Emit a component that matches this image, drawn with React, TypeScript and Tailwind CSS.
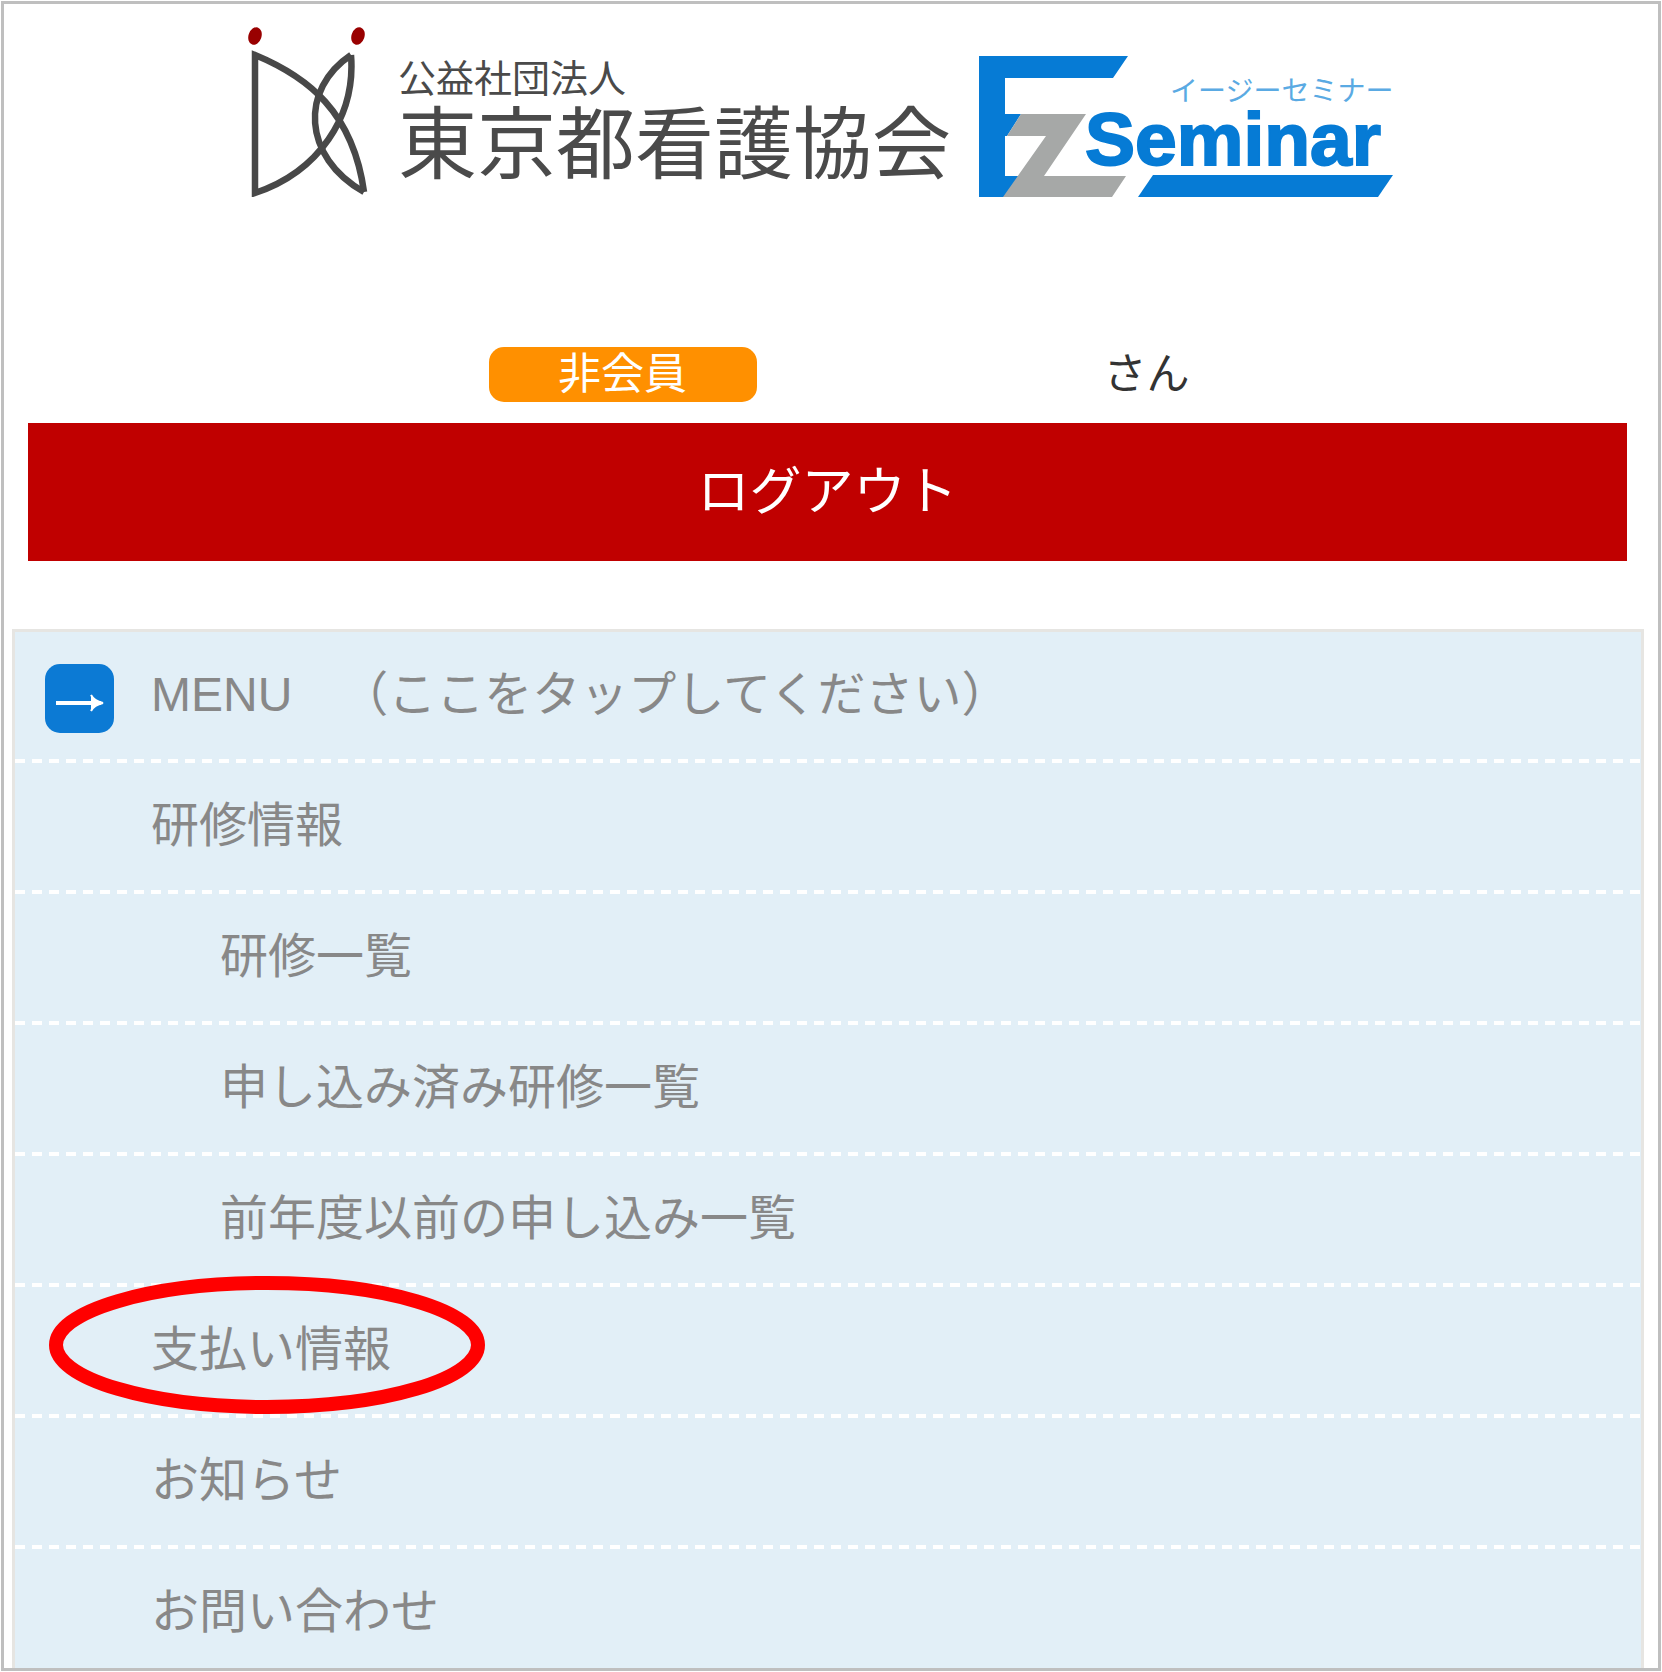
// スマホ版メニュー画面（ヘッダーロゴ・会員区分・ログアウト・開いた状態のメニュー）
import { clsx } from "clsx";

type MenuItem = {
  label: string;
  sub?: boolean; // 一段下げて表示
  marked?: boolean; // 赤丸で強調
};

const MENU_ITEMS: MenuItem[] = [
  { label: "研修情報" },
  { label: "研修一覧", sub: true },
  { label: "申し込み済み研修一覧", sub: true },
  { label: "前年度以前の申し込み一覧", sub: true },
  { label: "支払い情報", marked: true },
  { label: "お知らせ" },
  { label: "お問い合わせ" },
];

// 白い破線の区切り
function Dashes() {
  return (
    <div className="h-1 bg-[linear-gradient(to_right,#ffffff_10px,transparent_10px)] bg-[length:17px_4px] bg-repeat-x" />
  );
}

function AssociationMark() {
  return (
    <svg width="122" height="170" viewBox="0 0 122 170" fill="none" aria-hidden="true">
      <g fill="#990000">
        <ellipse cx="7" cy="9" rx="6.5" ry="9" transform="rotate(18 7 9)" />
        <ellipse cx="110" cy="9" rx="6.5" ry="9" transform="rotate(18 110 9)" />
      </g>
      <g stroke="#484848" strokeWidth="6.5" strokeMiterlimit="3">
        <path d="M116 165C105 85 60 50 7 28V166C70 145 108 90 103 28" />
        <path d="M103 28C52 62 54 130 116 165" />
      </g>
    </svg>
  );
}

function EzSeminarLogo() {
  return (
    <svg width="415" height="141" viewBox="0 0 415 141" role="img" aria-label="EZ Seminar">
      <path
        fill="#067bd5"
        d="M0 0H149L134 22H26V58H42L28 80H26V120H40L26 141H0Z"
      />
      <path fill="#a6a8a7" d="M42 58H107L65 120H147L133 141H24L67 80H28Z" />
      <path fill="#067bd5" d="M174 119H414L399 141H159Z" />
      <text
        x="191"
        y="45"
        fill="#5aaae3"
        className="font-['Noto_Sans_CJK_JP',sans-serif] text-[28px]"
      >
        イージーセミナー
      </text>
      <text
        x="106"
        y="109"
        fill="#067bd5"
        stroke="#067bd5"
        strokeWidth="2"
        className="font-['Liberation_Sans',sans-serif] text-[75px] font-bold"
      >
        Seminar
      </text>
    </svg>
  );
}

export default function App() {
  return (
    <div className="flex min-h-screen flex-col bg-white p-px font-['Liberation_Sans','Noto_Sans_CJK_JP',sans-serif]">
      <div className="flex flex-1 flex-col border-3 border-[#bfbfbf]">
        {/* ロゴ */}
        <header className="flex items-end justify-center gap-7 pt-[23px] pr-5">
          <AssociationMark />
          <div className="flex flex-col gap-2 pb-3 whitespace-nowrap text-[#4a4a4a]">
            <p className="text-[38px] leading-[38px]">公益社団法人</p>
            <h1 className="text-[79px] leading-[79px]">東京都看護協会</h1>
          </div>
          <EzSeminarLogo />
        </header>

        {/* 会員区分とお名前 */}
        <div className="mt-[150px] flex items-center justify-center gap-[347px] pl-4 text-[43px] leading-[55px]">
          <span className="w-[268px] rounded-[15px] bg-[#ff9000] text-center text-white">
            非会員
          </span>
          <span className="text-[#333333]">さん</span>
        </div>

        <button
          type="button"
          className="mt-[21px] mr-[31px] ml-6 h-[138px] bg-[#c00000] text-[52px] leading-[52px] text-white"
        >
          ログアウト
        </button>

        {/* メニュー */}
        <nav className="mt-[68px] mr-3.5 ml-2 flex-1 border-3 border-b-0 border-[#e6e5e2] bg-[#e2eff7] text-[48px] leading-[48px] text-[#888888]">
          <button
            type="button"
            className="flex h-[127px] w-full items-start gap-[37px] pt-8 pl-[30px] text-left"
          >
            <span className="flex size-[69px] items-center justify-center rounded-[15px] bg-[#0c7ad4] pt-2">
              <svg width="50" height="20" viewBox="0 0 50 20" fill="none" aria-hidden="true">
                <path d="M1 10H46" stroke="#ffffff" strokeWidth="4" />
                <path d="M36 2Q39 8 48 10Q39 12 36 18" fill="#ffffff" stroke="#ffffff" strokeWidth="2" />
              </svg>
            </span>
            <span className="leading-[62px] [text-spacing-trim:space-all]">
              MENU　（ここをタップしてください）
            </span>
          </button>
          <ul>
            {MENU_ITEMS.map((item) => (
              <li key={item.label} className="group relative">
                <Dashes />
                <a
                  href="#"
                  className={clsx(
                    "block h-[127px] pt-[39px] group-last:h-[110px]",
                    item.sub ? "pl-[205px]" : "pl-[136px]"
                  )}
                >
                  {item.label}
                </a>
                {item.marked && (
                  <svg
                    width="436"
                    height="138"
                    viewBox="0 0 436 138"
                    className="pointer-events-none absolute top-[-7px] left-[34px] z-10"
                    aria-hidden="true"
                  >
                    <ellipse
                      cx="218"
                      cy="69"
                      rx="211"
                      ry="62"
                      fill="none"
                      stroke="#ff0000"
                      strokeWidth="14"
                    />
                  </svg>
                )}
              </li>
            ))}
          </ul>
        </nav>
      </div>
    </div>
  );
}
